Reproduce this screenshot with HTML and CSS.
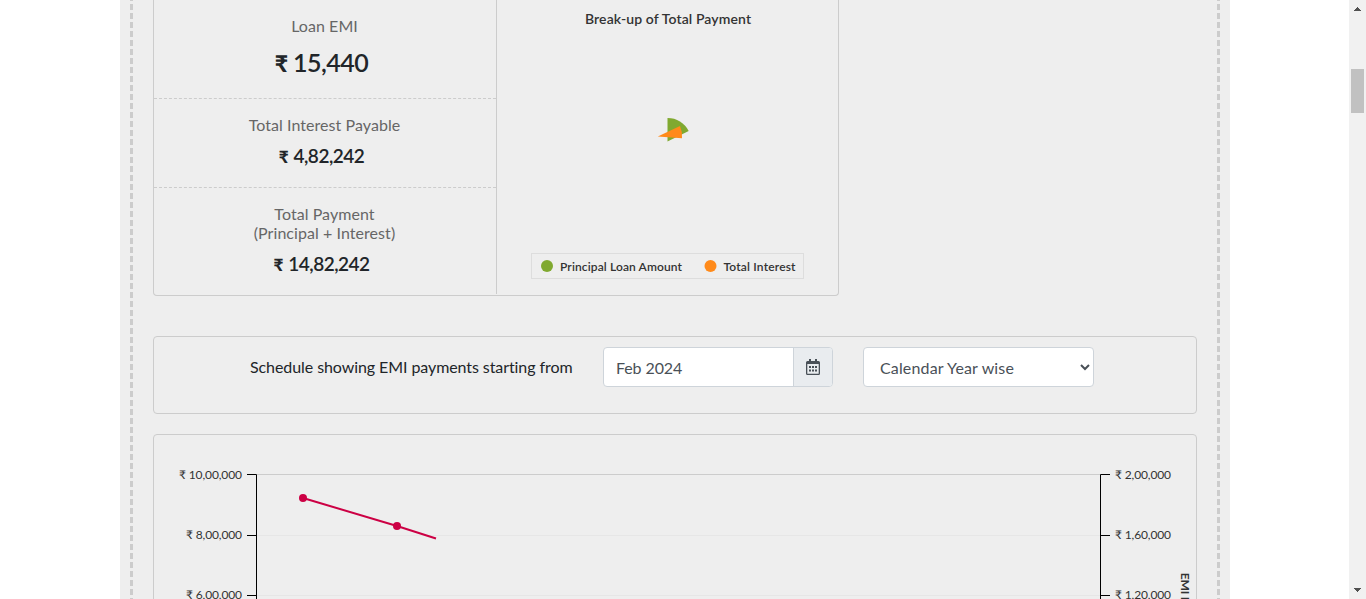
FILE: index.html
```html
<!DOCTYPE html>
<html lang="en">
<head>
<meta charset="utf-8">
<title>EMI Calculator</title>
<link rel="stylesheet" href="styles.css">
</head>
<body>
<div class="window">
  <main class="page">
    <div class="content">
      <section class="panel summary">
        <div class="figures">
          <div class="figure emi"><h4>Loan EMI</h4><p><b>₹</b><span>15,440</span></p></div>
          <div class="figure interest"><h4>Total Interest Payable</h4><p><b>₹</b><span>4,82,242</span></p></div>
          <div class="figure total"><h4>Total Payment<br>(Principal + Interest)</h4><p><b>₹</b><span>14,82,242</span></p></div>
        </div>
        <svg class="pie" width="341" height="295" viewBox="497 0 341 295">
          <text class="pie-title" x="585" y="24" textLength="166">Break-up of Total Payment</text>
          <path fill="#80a930" d="M667.5 141.5V118A23.5 23.5 0 0 1 688.7 131Z"/>
          <path fill="#ff8a1a" d="M657.8 136.5L680 126A25 25 0 0 1 682 138.2Z"/>
          <rect class="legend-box" x="531.5" y="253.5" width="272" height="25"/>
          <circle cx="547" cy="266" r="6" fill="#80a930"/>
          <text class="legend-text" x="560" y="271" textLength="122">Principal Loan Amount</text>
          <circle cx="710.5" cy="266" r="6" fill="#ff8a1a"/>
          <text class="legend-text" x="723.5" y="271" textLength="72">Total Interest</text>
        </svg>
      </section>
      <section class="panel schedule">
        <label class="schedule-label">Schedule showing EMI payments starting from</label>
        <div class="date-group">
          <div class="date-value">Feb 2024</div>
          <div class="date-icon">
            <svg width="16" height="18" viewBox="0 0 16 18">
              <path fill="#495057" fill-rule="evenodd" d="M4 1h2v2h4V1h2v2h1.500q1.500 0 1.500 1.500v11q0 1.500-1.500 1.500h-11Q1 17 1 15.500v-11Q1 3 2.500 3H4zM2.300 6v9.700h11.400V6z"/>
              <path fill="#495057" d="M4 8h2v2H4zm3 0h2v2H7zm3 0h2v2h-2zM4 11.500h2v2H4zm3 0h2v2H7zm3 0h2v2h-2z"/>
            </svg>
          </div>
        </div>
        <select class="year-select"><option>Calendar Year wise</option></select>
      </section>
      <section class="panel chart">
        <svg width="1042" height="180" viewBox="154 435 1042 180">
          <path class="grid-top" d="M257 474.500H1100"/>
          <path class="grid" d="M257 535.500H1100M257 595.500H1100"/>
          <path class="axis" d="M247 474.500H256.500V615M247 535.500H256M247 595.500H256M1110 474.500H1100.500V615M1101 535.500H1110M1101 595.500H1110"/>
          <path class="series" d="M303 498L397 526L436 538.500"/>
          <circle cx="303" cy="498" r="4" fill="#cc0044"/>
          <circle cx="397" cy="526" r="4" fill="#cc0044"/>
          <g class="axis-label">
            <text x="179" y="479" textLength="63">₹ 10,00,000</text>
            <text x="186" y="539" textLength="56">₹ 8,00,000</text>
            <text x="186" y="599" textLength="56">₹ 6,00,000</text>
            <text x="1115" y="479" textLength="56">₹ 2,00,000</text>
            <text x="1115" y="539" textLength="56">₹ 1,60,000</text>
            <text x="1115" y="599" textLength="56">₹ 1,20,000</text>
          </g>
          <text class="axis-title" transform="translate(1181 572.700) rotate(90)">EMI Payment / year</text>
        </svg>
      </section>
    </div>
  </main>
  <div class="scrollbar">
    <svg width="17" height="599" viewBox="0 0 17 599" shape-rendering="crispEdges">
      <path fill="#505050" d="M8 7h1v1h1v1h1v1h1v1H5v-1h1V9h1V8h1zM5 588h7v1h-1v1h-1v1H9v1H8v-1H7v-1H6v-1H5z"/>
      <rect x="2" y="69" width="13" height="44" fill="#c1c1c1"/>
    </svg>
  </div>
</div>
</body>
</html>
```

FILE: styles.css
```css
* { box-sizing: border-box; }
body { margin: 0; overflow: hidden; background: #fff; font-family: Lato, "Noto Sans", sans-serif; color: #212529; font-size: 16px; }
.window { display: flex; height: 599px; overflow: hidden; }
.page { flex: 1; padding: 0 119px 0 120px; }
.content {
  height: 599px;
  overflow: hidden;
  padding: 0 33px;
  background-color: #eee;
  background-image: linear-gradient(#ccc 6px, transparent 6px), linear-gradient(#ccc 6px, transparent 6px);
  background-size: 3px 9px;
  background-position: 10px 4px, 1097px 4px;
  background-repeat: repeat-y;
}
.panel { border: 1px solid #ccc; border-radius: 4px; }
.summary { display: flex; width: 686px; height: 296px; border-top: 0; border-radius: 0 0 4px 4px; }
.figures { width: 343px; height: 294px; border-right: 1px solid #ccc; text-align: center; }
.figure { border-bottom: 1px dashed #ccc; }
.figure h4 { margin: 0; padding-right: 1px; font-size: 16px; line-height: 19px; font-weight: 400; letter-spacing: 0.06px; color: #666; }
.figure p { display: flex; align-items: baseline; justify-content: center; gap: 5px; margin: 0; font-size: 19px; line-height: 23px; font-weight: 600; letter-spacing: -0.5px; padding-right: 7px; }
.figure b { font-size: 17px; font-weight: 900; letter-spacing: 0; }
.emi { height: 99px; padding-top: 16px; }
.emi p { gap: 5px; margin-top: 12px; font-size: 25px; line-height: 31px; }
.emi b { font-size: 23px; }
.interest { height: 89px; padding-top: 16px; }
.interest p { margin-top: 10px; }
.total { padding-top: 16px; border-bottom: 0; }
.total p { margin-top: 10px; }
.pie-title { font-size: 14px; font-weight: 600; fill: #333; }
.legend-box { fill: none; stroke: #ddd; }
.legend-text { font-size: 12px; font-weight: 600; fill: #333; }
.schedule { display: flex; margin-top: 40px; height: 78px; padding: 10px 0 0 96px; }
.schedule-label { width: 353px; line-height: 40px; letter-spacing: -0.08px; }
.date-group { display: flex; width: 230px; height: 40px; margin-right: 30px; border: 1px solid #ced4da; border-radius: 4px; overflow: hidden; background: #fff; color: #495057; }
.date-value { flex: 1; padding-left: 12px; line-height: 40px; letter-spacing: -0.1px; }
.date-icon { display: flex; align-items: center; justify-content: center; width: 39px; border-left: 1px solid #ced4da; background: #e9ecef; }
.year-select { width: 231px; height: 40px; padding: 1px 0 0 12px; border: 1px solid #ced4da; border-radius: 4px; background: #fff; color: #495057; font: 16px Lato, sans-serif; letter-spacing: 0.15px; }
.chart { margin-top: 20px; height: 200px; }
.chart svg, .pie, .scrollbar svg { display: block; }
.grid { stroke: #e6e6e6; }
.grid-top { stroke: #ccc; }
.axis { fill: none; stroke: #000; }
.series { fill: none; stroke: #c04; stroke-width: 2; }
.axis-label { font-size: 12px; fill: #333; }
.axis-title { font-size: 12px; font-weight: 700; letter-spacing: -0.15px; fill: #333; }
.scrollbar { width: 17px; background: #f1f1f1; }
```
